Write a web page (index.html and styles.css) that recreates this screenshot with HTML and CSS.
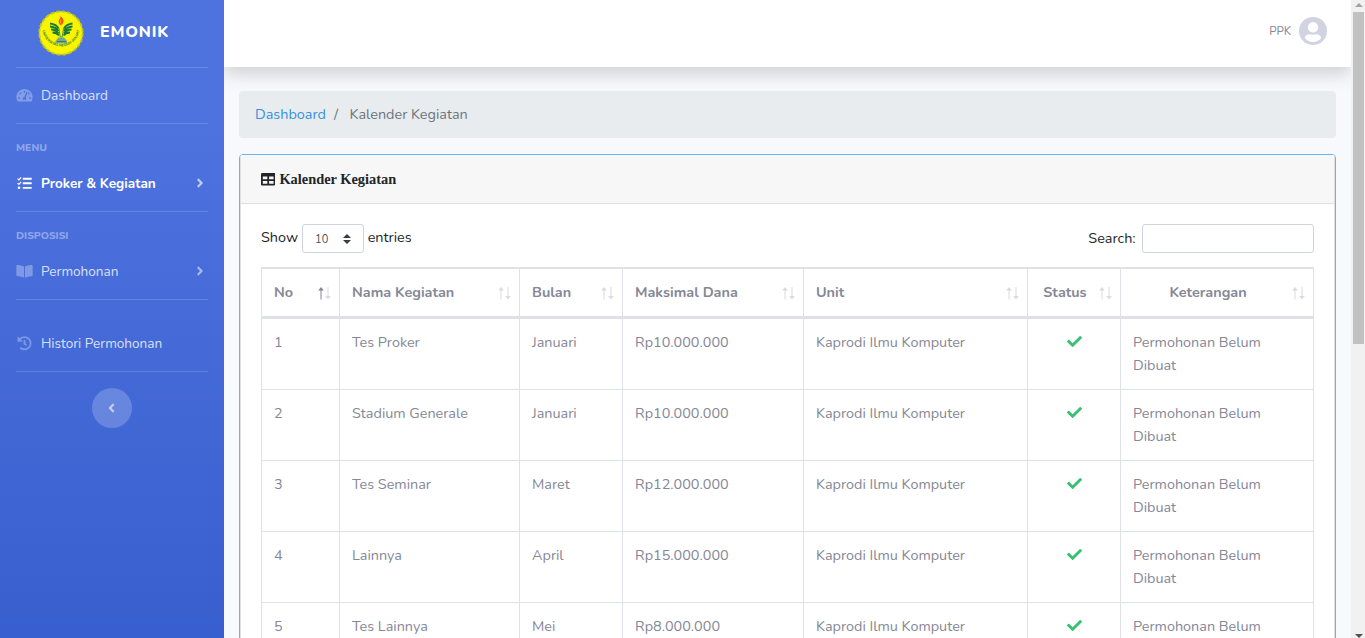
FILE: index.html
```html
<!DOCTYPE html>
<html lang="id">
<head>
<meta charset="utf-8">
<title>EMONIK - Kalender Kegiatan</title>
<link rel="stylesheet" href="styles.css">
</head>
<body>
<svg class="defs" width="0" height="0" aria-hidden="true">
  <symbol id="check" viewBox="0 0 512 512"><path d="M173.898 439.404l-166.4-166.4c-9.997-9.997-9.997-26.206 0-36.204l36.203-36.204c9.997-9.998 26.207-9.998 36.204 0L192 312.69 432.095 72.596c9.997-9.997 26.207-9.997 36.204 0l36.203 36.204c9.997 9.997 9.997 26.206 0 36.204l-294.4 294.401c-9.998 9.997-26.207 9.997-36.204-.001z"/></symbol>
  <symbol id="angle" viewBox="0 0 256 512"><path d="M224.3 273l-136 136c-9.4 9.4-24.6 9.4-33.9 0l-22.6-22.6c-9.4-9.4-9.4-24.6 0-33.9l96.4-96.4-96.4-96.4c-9.4-9.4-9.4-24.6 0-33.9L54.3 103c9.4-9.4 24.6-9.4 33.9 0l136 136c9.5 9.4 9.5 24.6.1 34z"/></symbol>
  <symbol id="sort" viewBox="0 0 14 13"><path class="up-arrow" d="M3 0L5.800 3.400H3.500V12.500H2.500V3.400H.200z"/><path class="down-arrow" d="M10 12.500L7.200 9.100H9.500V0H10.500V9.100H12.800z"/></symbol>
</svg>
<div class="wrapper">
  <nav class="sidebar">
    <a class="brand">
      <svg class="logo" viewBox="0 0 46 46">
        <circle cx="23" cy="23" r="21.800" fill="#f4ee07"/>
        <circle cx="23" cy="23" r="21.700" fill="none" stroke="#b9c81e" stroke-width="1.800" stroke-dasharray="4 1.680"/>
        <circle cx="23" cy="23" r="20.300" fill="#fbf400"/>
        <path d="M22.600 6c2.400 2.200 3.600 4.500 2.600 6.500-.5 1.400-1.700 2-2.200 3-2-1.700-2.900-3.500-2-5.500.8-1.500 1.700-2 1.600-4z" fill="#e8501a"/>
        <path d="M22.800 9.500v4" stroke="#fbd000" stroke-width=".8"/>
        <g fill="none" stroke="#167c3c" stroke-width="1.800">
          <path d="M12 13.500c4 .5 7 2 8.500 5M12 16.500c4 .3 7 2 8.500 4.500M13 19.500c3.500 0 6 1.500 7.500 4M14.500 22.500c3 0 5 1 6.500 3"/>
          <path d="M34.500 13.500c-4 .5-7 2-8.500 5M34.500 16.500c-4 .3-7 2-8.500 4.500M33.500 19.500c-3.500 0-6 1.500-7.500 4M32 22.500c-3 0-5 1-6.500 3"/>
        </g>
        <path d="M20.800 18l1.400 9h2l1.500-9" fill="none" stroke="#4f9b35" stroke-width="1"/>
        <path d="M17.500 33.500V31l3-3.500h5.500l3 3.500v2.500z" fill="#6fa88e"/>
        <path d="M19 31.500h9" stroke="#3a7c70" stroke-width="1"/>
        <path id="arc" d="M4.600 20.500a18.600 18.600 0 0 0 36.800 0" fill="none"/>
        <text class="logo-text"><textPath href="#arc" startOffset="0">UNIVERSITAS NEGERI JAKARTA</textPath></text>
      </svg>
      <span class="brand-name">EMONIK</span>
    </a>
    <hr>
    <a class="nav-item">
      <svg class="icon dim" viewBox="0 0 576 512"><path fill-rule="evenodd" d="M288 32C129 32 0 161 0 320c0 53 14 102 39 145 6 9 16 15 27 15h444c11 0 21-6 27-15 25-43 39-92 39-145C576 161 447 32 288 32zM288 96a32 32 0 1 1 0 64 32 32 0 0 1 0-64zM96 384a32 32 0 1 1 0-64 32 32 0 0 1 0 64zM144 224a32 32 0 1 1 0-64 32 32 0 0 1 0 64zM391 168L334 340c11 11 18 27 18 44 0 12-3 23-9 32H233c-6-9-9-20-9-32 0-34 27-62 61-64l61-167c9-27 53-13 45 15zM410 207a32 32 0 1 1 22 17c-12 0-21-7-27-15zM480 384a32 32 0 1 1 0-64 32 32 0 0 1 0 64z"/></svg>
      <span>Dashboard</span>
    </a>
    <hr>
    <div class="heading">MENU</div>
    <a class="nav-item active">
      <svg class="icon" viewBox="0 0 512 512"><path d="M208 64h288a16 16 0 0 1 16 16v32a16 16 0 0 1-16 16H208a16 16 0 0 1-16-16V80a16 16 0 0 1 16-16zM208 224h288a16 16 0 0 1 16 16v32a16 16 0 0 1-16 16H208a16 16 0 0 1-16-16v-32a16 16 0 0 1 16-16zM208 384h288a16 16 0 0 1 16 16v32a16 16 0 0 1-16 16H208a16 16 0 0 1-16-16v-32a16 16 0 0 1 16-16z"/><circle cx="62" cy="416" r="46"/><path d="M12 92l46 44 78-88M12 252l46 44 78-88" fill="none" stroke="currentColor" stroke-width="42"/></svg>
      <span>Proker &amp; Kegiatan</span>
      <svg class="angle"><use href="#angle"/></svg>
    </a>
    <hr>
    <div class="heading">DISPOSISI</div>
    <a class="nav-item">
      <svg class="icon dim" viewBox="0 0 576 512"><path d="M542.22 32.05c-54.8 3.11-163.72 14.43-230.96 55.59-4.64 2.84-7.27 7.89-7.27 13.17v363.87c0 11.55 12.63 18.85 23.28 13.49 69.18-34.82 169.23-44.32 218.7-46.92 16.89-.89 30.02-14.43 30.02-30.66V62.75c.01-17.71-15.35-31.74-33.77-30.7zM264.73 87.64C197.5 46.48 88.58 35.17 33.78 32.05 15.36 31.01 0 45.04 0 62.75V400.6c0 16.24 13.13 29.78 30.02 30.66 49.49 2.6 149.59 12.11 218.77 46.95 10.62 5.35 23.21-1.94 23.21-13.46V100.63c0-5.29-2.62-10.14-7.27-12.99z"/></svg>
      <span>Permohonan</span>
      <svg class="angle"><use href="#angle"/></svg>
    </a>
    <hr>
    <a class="nav-item spaced">
      <svg class="icon dim" viewBox="0 0 512 512"><path d="M504 255.531c.253 136.64-111.18 248.372-247.82 248.468-59.015.042-113.223-20.53-155.822-54.911-11.077-8.94-11.905-25.541-1.839-35.607l11.267-11.267c8.609-8.609 22.353-9.551 31.891-1.984C173.062 425.135 212.781 440 256 440c101.705 0 184-82.311 184-184 0-101.705-82.311-184-184-184-48.814 0-93.149 18.969-126.068 49.932l50.754 50.754c10.08 10.08 2.941 27.314-11.313 27.314H24c-8.837 0-16-7.163-16-16V38.627c0-14.254 17.234-21.393 27.314-11.314l49.372 49.372C129.209 34.136 189.552 8 256 8c136.81 0 247.747 110.78 248 247.531zm-180.912 78.784l9.823-12.63c8.138-10.463 6.253-25.542-4.21-33.679L288 256.349V152c0-13.255-10.745-24-24-24h-16c-13.255 0-24 10.745-24 24v135.651l65.409 50.874c10.463 8.137 25.541 6.253 33.679-4.21z"/></svg>
      <span>Histori Permohonan</span>
    </a>
    <hr>
    <button class="toggle" aria-label="Toggle sidebar"><svg><use href="#angle"/></svg></button>
  </nav>

  <div class="content">
    <header class="topbar">
      <span class="user">PPK</span>
      <svg class="avatar" viewBox="0 0 28 28"><circle cx="14" cy="14" r="14" fill="#d1d3e2"/><circle cx="14" cy="10.300" r="5.200" fill="#fff"/><path d="M5.800 21c0-2.500 3.800-4.200 5.400-3.700 1.900.6 3.700.6 5.600 0 1.600-.5 5.400 1.200 5.400 3.700-2 2.700-5 4-8.200 4s-6.200-1.300-8.200-4z" fill="#fff"/></svg>
    </header>
    <main>
      <div class="breadcrumb"><a>Dashboard</a><span class="sep">/</span><span>Kalender Kegiatan</span></div>
      <section class="card-outer"><div class="card">
        <div class="card-header">
          <svg viewBox="0 0 512 512"><path d="M464 32H48C21.490 32 0 53.490 0 80v352c0 26.510 21.490 48 48 48h416c26.510 0 48-21.490 48-48V80c0-26.510-21.490-48-48-48zM224 416H64v-96h160v96zm0-160H64v-96h160v96zm224 160H288v-96h160v96zm0-160H288v-96h160v96z"/></svg>
          <span>Kalender Kegiatan</span>
        </div>
        <div class="card-body">
          <div class="controls">
            <div class="length"><span class="word">Show</span><span class="select">10<svg viewBox="0 0 4 5"><path d="M2 0L0 2h4zm0 5L0 3h4z"/></svg></span><span class="word">entries</span></div>
            <label class="search"><span>Search:</span><input type="text"></label>
          </div>
          <table>
            <colgroup><col class="c1"><col class="c2"><col class="c3"><col class="c4"><col class="c5"><col class="c6"><col class="c7"></colgroup>
            <thead><tr>
              <th><div class="th asc"><span>No</span><svg class="sort"><use href="#sort"/></svg></div></th>
              <th><div class="th"><span>Nama Kegiatan</span><svg class="sort"><use href="#sort"/></svg></div></th>
              <th><div class="th"><span>Bulan</span><svg class="sort"><use href="#sort"/></svg></div></th>
              <th><div class="th"><span>Maksimal Dana</span><svg class="sort"><use href="#sort"/></svg></div></th>
              <th><div class="th"><span>Unit</span><svg class="sort"><use href="#sort"/></svg></div></th>
              <th><div class="th mid"><span>Status</span><svg class="sort"><use href="#sort"/></svg></div></th>
              <th><div class="th mid"><span>Keterangan</span><svg class="sort"><use href="#sort"/></svg></div></th>
            </tr></thead>
            <tbody>
              <tr><td>1</td><td>Tes Proker</td><td>Januari</td><td>Rp10.000.000</td><td>Kaprodi Ilmu Komputer</td><td class="ok"><svg><use href="#check"/></svg></td><td>Permohonan Belum<br>Dibuat</td></tr>
              <tr><td>2</td><td>Stadium Generale</td><td>Januari</td><td>Rp10.000.000</td><td>Kaprodi Ilmu Komputer</td><td class="ok"><svg><use href="#check"/></svg></td><td>Permohonan Belum<br>Dibuat</td></tr>
              <tr><td>3</td><td>Tes Seminar</td><td>Maret</td><td>Rp12.000.000</td><td>Kaprodi Ilmu Komputer</td><td class="ok"><svg><use href="#check"/></svg></td><td>Permohonan Belum<br>Dibuat</td></tr>
              <tr><td>4</td><td>Lainnya</td><td>April</td><td>Rp15.000.000</td><td>Kaprodi Ilmu Komputer</td><td class="ok"><svg><use href="#check"/></svg></td><td>Permohonan Belum<br>Dibuat</td></tr>
              <tr><td>5</td><td>Tes Lainnya</td><td>Mei</td><td>Rp8.000.000</td><td>Kaprodi Ilmu Komputer</td><td class="ok"><svg><use href="#check"/></svg></td><td>Permohonan Belum</td></tr>
            </tbody>
          </table>
        </div>
      </div></section>
    </main>
  </div>
  <div class="scrollbar"><i class="up"></i><i class="thumb"></i><i class="down"></i></div>
</div>
</body>
</html>
```
FILE: styles.css
```css
* { box-sizing: border-box; }
body { margin: 0; height: 638px; overflow: hidden; font: 14.4px/23px Nunito, Lato, sans-serif; color: #212529; background: #f8fafc; }
.defs { display: block; }
.wrapper { display: flex; height: 638px; overflow: hidden; }
svg { fill: currentColor; display: block; }

.sidebar { width: 224px; flex: none; background: linear-gradient(180deg, #4e73df 10%, #224abe 100%) 0 0 / 100% 1180px; color: rgba(255,255,255,.8); font-size: 13.6px; }
.sidebar hr { margin: 0 16px; border: 0; border-top: 1px solid rgba(255,255,255,.15); }
.brand { display: flex; align-items: center; height: 67px; padding: 0 0 2px 38px; }
.logo { width: 46px; height: 46px; }
.logo-text { font: bold 3.5px "Liberation Sans", sans-serif; fill: #33852d; }
.brand-name { margin-left: 16px; color: #fff; font-size: 16px; font-weight: 800; letter-spacing: .8px; }
.nav-item { display: flex; align-items: center; height: 55px; padding: 0 20px 0 16px; }
.icon { width: 17px; height: 14.5px; margin-right: 8px; }
.dim { opacity: .38; }
.active { color: #fff; font-weight: 700; }
.angle { width: 8px; height: 14px; margin-left: auto; opacity: .65; }
.heading { height: 31px; padding: 12px 16px 0; font-size: 10.4px; font-weight: 800; line-height: 24px; color: rgba(255,255,255,.4); }
.heading + .nav-item { height: 56px; }
.nav-item.spaced { height: 71px; padding-top: 16px; }
.toggle { display: flex; align-items: center; justify-content: center; width: 40px; height: 40px; margin: 16px auto 0; padding: 0 1px 0 0; border: 0; border-radius: 50%; background: rgba(255,255,255,.2); color: rgba(255,255,255,.6); }
.toggle svg { width: 7px; height: 14px; transform: rotate(180deg); }

.content { width: 1127px; flex: none; overflow: hidden; background: #f8f9fc; }
.topbar { display: flex; align-items: center; justify-content: flex-end; gap: 8px; height: 67px; padding: 0 24px 5px; background: #fff; box-shadow: 0 8px 16px rgba(0,0,0,.15); }
.user { color: #858796; font-size: 11.52px; }
.avatar { width: 28px; height: 28px; }
main { padding: 24px 15px 0; }
.breadcrumb { display: flex; height: 47px; padding: 12px 16px; border-radius: 4px; background: #e9ecef; color: #6c757d; }
.breadcrumb a { color: #3490dc; }
.sep { margin: 0 11.500px 0 8px; }
.card-outer { margin-top: 16px; border: 1px solid #6cb2eb; border-radius: 4px; overflow: hidden; }
.card { border: 1px solid #dfdfdf; border-top: 0; background: #fff; }
.card-header { display: flex; align-items: center; gap: 4px; height: 49px; padding: 0 20px; background: #f7f7f7; border-bottom: 1px solid #dfdfdf; font: bold 14.4px/20px "Liberation Serif", serif; }
.card-header svg { width: 14.4px; height: 14.4px; }
.card-body { padding: 20px 20px 0; }
.controls { display: flex; justify-content: space-between; height: 43px; align-items: flex-start; }
.length, .search { display: flex; height: 29px; align-items: center; }
.word { margin-bottom: 2px; }
.select { display: flex; align-items: center; justify-content: space-between; width: 62px; height: 29px; margin: 0 3.6px 0 4px; padding: 2px 12px 0; border: 1px solid #ced4da; border-radius: 3px; font-size: 11px; line-height: 24px; color: #495057; }
.select svg { width: 8px; height: 10px; margin-bottom: 1px; fill: #343a40; }
.search input { width: 172px; height: 29px; margin-left: 6.4px; border: 1px solid #ced4da; border-radius: 3px; background: #fff; }
table { width: 1053px; table-layout: fixed; border-collapse: separate; border-spacing: 0; border-top: 1px solid #dee2e6; border-left: 1px solid #dee2e6; color: #858796; }
.c1 { width: 78px; } .c2 { width: 180px; } .c3 { width: 103px; } .c4 { width: 181px; } .c5 { width: 224px; } .c6 { width: 93px; } .c7 { width: 193px; }
th, td { padding: 12px; border-right: 1px solid #dee2e6; border-top: 1px solid #dee2e6; text-align: left; vertical-align: top; white-space: nowrap; }
th { border-bottom: 2px solid #dee2e6; padding-right: 7px; }
.th { display: flex; justify-content: space-between; height: 23px; }
.mid span { flex: 1; margin-right: 9px; text-align: center; }
.sort { width: 14px; height: 13px; margin-top: 6px; --up: .3; }
.asc .sort { --up: 1; }
.up-arrow { opacity: var(--up); }
.down-arrow { opacity: .3; }
.ok { color: #38c172; }
.ok svg { width: 15px; height: 15px; margin: 3px auto 0; }

.scrollbar { position: relative; width: 14px; flex: none; background: #f1f1f1; }
.up, .down { position: absolute; left: 4px; border: 4px solid transparent; border-top: 0; }
.up { top: 3px; border-bottom: 4px solid #a3a3a3; }
.down { top: 634px; border-top: 4px solid #505050; border-bottom: 0; }
.thumb { position: absolute; top: 12px; left: 2px; width: 11px; height: 332px; background: #c1c1c1; }
```
